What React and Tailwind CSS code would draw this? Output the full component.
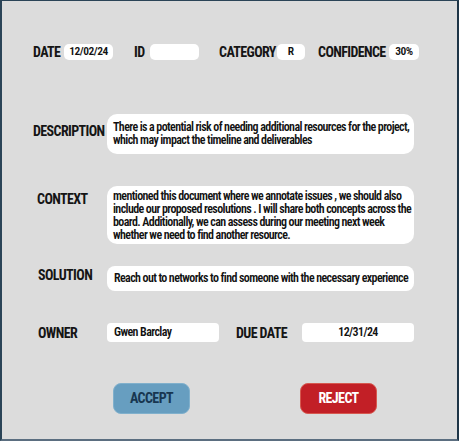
import React from "react";

function Label({ children, className = "" }) {
  return (
    <span className={"font-bold text-[14px] leading-none text-[#151515] tracking-[-0.6px] whitespace-nowrap " + className}>
      {children}
    </span>
  );
}

const body = "font-semibold text-[12px] leading-[13px] text-[#111] whitespace-nowrap tracking-[-0.6px]";

export default function App() {
  return (
    <div className="w-[459px] h-[441px] font-['Roboto_Condensed','Open_Sans_Condensed',sans-serif] bg-[#dcdcdc] border-t border-l-2 border-r-2 border-b-2 border-t-[#2b4457] border-l-[#2b4457] border-r-[#1e3547] border-b-[#5b6e80] flex flex-col">
      {/* Row 1 */}
      <div className="mt-[43px] h-[16px] flex items-center">
        <div className="ml-[31px] w-[31px] leading-none"><Label>DATE</Label></div>
        <div className="w-[49px] h-[16px] bg-white rounded-[5px] flex items-center justify-center text-[11.5px] font-semibold text-[#111] tracking-[-0.5px]">12/02/24</div>
        <div className="ml-[21px] w-[16px] leading-none"><Label>ID</Label></div>
        <div className="w-[49px] h-[16px] bg-white rounded-[5px]" />
        <div className="ml-[20px] w-[58px] leading-none"><Label>CATEGORY</Label></div>
        <div className="w-[28px] h-[16px] bg-white rounded-[5px] flex items-center justify-center text-[11.5px] font-semibold text-[#111]">R</div>
        <div className="ml-[13px] w-[71px] leading-none"><Label>CONFIDENCE</Label></div>
        <div className="w-[30px] h-[16px] bg-white rounded-[5px] flex items-center justify-center text-[11.5px] font-semibold text-[#111] tracking-[-0.5px]">30%</div>
      </div>

      {/* Description */}
      <div className="mt-[54px] flex items-start">
        <div className="w-[105px] pl-[31px] pt-[9px] leading-none"><Label>DESCRIPTION</Label></div>
        <div className={"w-[307px] h-[40px] bg-white rounded-[10px] pl-[6px] pt-[7px] " + body}>
          There is a potential risk of needing additional resources for the project,<br />
          which may impact the timeline and deliverables
        </div>
      </div>

      {/* Context */}
      <div className="mt-[32px] flex items-start">
        <div className="w-[105px] pl-[35px] pt-[5px] leading-none"><Label>CONTEXT</Label></div>
        <div className={"w-[307px] h-[58px] bg-white rounded-[10px] pl-[6px] pt-[4px] " + body}>
          mentioned this document where we annotate issues , we should also<br />
          include our proposed resolutions . I will share both concepts across the<br />
          board. Additionally, we can assess during our meeting next week<br />
          whether we need to find another resource.
        </div>
      </div>

      {/* Solution */}
      <div className="mt-[22px] flex items-start">
        <div className="w-[105px] pl-[36px] pt-[1px] leading-none"><Label>SOLUTION</Label></div>
        <div className={"w-[307px] h-[25px] bg-white rounded-[8px] pl-[7px] flex items-center " + body}>
          Reach out to networks to find someone with the necessary experience
        </div>
      </div>

      {/* Owner / Due date */}
      <div className="mt-[32px] h-[19px] flex items-center">
        <div className="w-[105px] pl-[36px] leading-none"><Label>OWNER</Label></div>
        <div className={"w-[112px] h-[19px] bg-white rounded-[4px] pl-[7px] flex items-center " + body}>Gwen Barclay</div>
        <div className="ml-[17px] w-[66px] leading-none"><Label>DUE DATE</Label></div>
        <div className={"w-[112px] h-[19px] bg-white rounded-[4px] flex items-center justify-center " + body}>12/31/24</div>
      </div>

      {/* Buttons */}
      <div className="mt-[41px] flex">
        <div className="ml-[111px] w-[77px] h-[31px] rounded-[8px] bg-[#679ec0] border border-[#80b0cc] flex items-center justify-center text-[14px] font-bold tracking-[-0.6px] text-[#173650]">ACCEPT</div>
        <div className="ml-[110px] w-[77px] h-[31px] rounded-[8px] bg-[#c21f26] border border-[#d6584f] flex items-center justify-center text-[14px] font-bold tracking-[-0.6px] text-white">REJECT</div>
      </div>
    </div>
  );
}
